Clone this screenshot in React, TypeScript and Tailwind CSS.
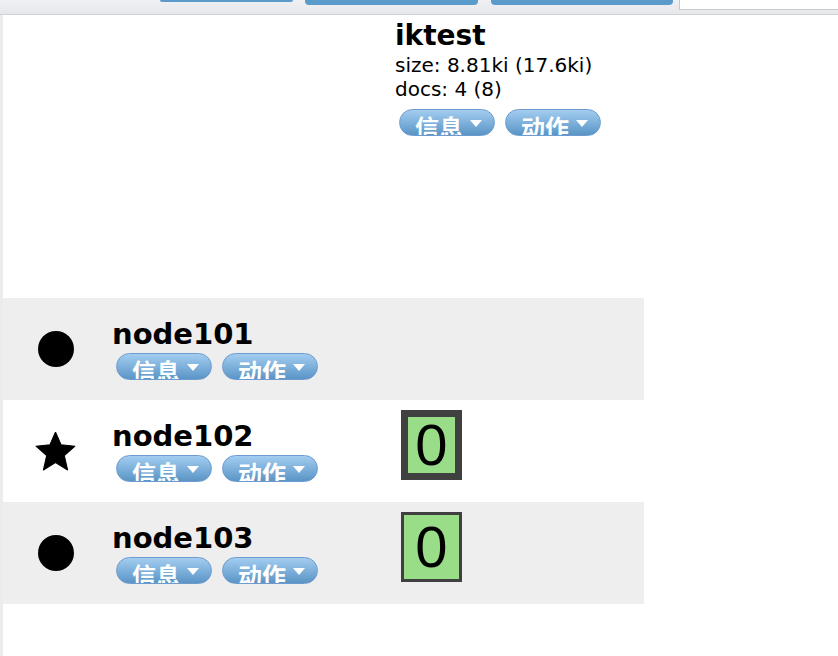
import React from "react";

const FONT = { fontFamily: '"DejaVu Sans", Verdana, sans-serif' };

function Caret() {
  return (
    <svg width="12" height="7" viewBox="0 0 12 7" className="shrink-0">
      <polygon points="0,0 12,0 6,7" fill="white" />
    </svg>
  );
}

function PillButton({ label }: { label: string }) {
  return (
    <div className="flex h-[27px] w-[96px] items-start overflow-hidden rounded-full border border-[#6d9bcf] bg-gradient-to-b from-[#a3cdf0] to-[#5a95c6] pl-[15px] pr-[12px]">
      <span
        className="pt-[5px] text-[24px] font-bold leading-none text-white"
        style={{ fontFamily: '"Noto Sans CJK SC", sans-serif' }}
      >
        {label}
      </span>
      <span className="ml-auto mt-[10px]">
        <Caret />
      </span>
    </div>
  );
}

function Buttons() {
  return (
    <div className="flex gap-[10px]">
      <PillButton label="信息" />
      <PillButton label="动作" />
    </div>
  );
}

function Star() {
  return (
    <svg width="41" height="39" viewBox="0 0 40 38">
      <polygon
        points="20,0 25.5,12.5 39,13.8 28.6,23 31.8,37 20,29.8 8.2,37 11.4,23 1,13.8 14.5,12.5"
        fill="black"
        strokeLinejoin="round"
        stroke="black"
        strokeWidth="1"
      />
    </svg>
  );
}

function Shard({ thick }: { thick?: boolean }) {
  return (
    <div
      className={`flex h-[70px] w-[61px] items-center justify-center bg-[#99dd88] border-[#404040] ${
        thick ? "border-[7px]" : "border-[3px]"
      }`}
    >
      <span
        className="text-[58px] leading-none text-black"
        style={{ fontFamily: '"Liberation Sans", Arial, sans-serif' }}
      >
        0
      </span>
    </div>
  );
}

type Node = { name: string; master: boolean; shard: "none" | "primary" | "replica"; grey: boolean };

const nodes: Node[] = [
  { name: "node101", master: false, shard: "none", grey: true },
  { name: "node102", master: true, shard: "primary", grey: false },
  { name: "node103", master: false, shard: "replica", grey: true },
];

export default function App() {
  return (
    <div className="min-h-screen w-[838px] bg-white text-black" style={FONT}>
      {/* top bar */}
      <div className="flex h-[15px] items-start border-b border-[#cdd3d7] bg-gradient-to-b from-[#eef0f2] to-[#e6e9ec]">
        <div className="ml-[160px] h-[2px] w-[133px] rounded-b-[3px] bg-[#5b9bcb]" />
        <div className="ml-[12px] h-[5px] w-[173px] rounded-b-[4px] bg-[#5b9bcb]" />
        <div className="ml-[13px] h-[5px] w-[182px] rounded-b-[4px] bg-[#5b9bcb]" />
        <div className="ml-[6px] h-[10px] flex-1 border-b border-l border-[#c9c9c9] bg-white" />
      </div>

      <div className="min-h-[641px] border-l-[3px] border-[#ececec]">
        {/* index header */}
        <div className="flex h-[283px] w-[641px]">
          <div className="w-[392px]" />
          <div className="flex flex-col pt-[4px]">
            <div className="text-[28px] font-bold leading-[34px]">iktest</div>
            <div className="text-[20px] leading-[24px]">size: 8.81ki (17.6ki)</div>
            <div className="text-[20px] leading-[24px]">docs: 4 (8)</div>
            <div className="ml-[4px] mt-[8px]">
              <Buttons />
            </div>
          </div>
        </div>

        {nodes.map((n) => (
          <div
            key={n.name}
            className={`flex h-[102px] w-[641px] ${n.grey ? "bg-[#eeeeee]" : "bg-white"}`}
          >
            <div className="flex w-[392px] items-center">
              <div className="flex w-[106px] justify-center pr-[1px]">
                {n.master ? (
                  <Star />
                ) : (
                  <div className="h-[36px] w-[36px] rounded-full bg-black" />
                )}
              </div>
              <div className="ml-[3px] flex flex-col">
                <div className="text-[29px] font-bold leading-[33px]">{n.name}</div>
                <div className="ml-[4px] mt-[2px]">
                  <Buttons />
                </div>
              </div>
            </div>
            <div className="pl-[6px] pt-[10px]">
              {n.shard !== "none" && <Shard thick={n.shard === "primary"} />}
            </div>
          </div>
        ))}
      </div>
    </div>
  );
}
